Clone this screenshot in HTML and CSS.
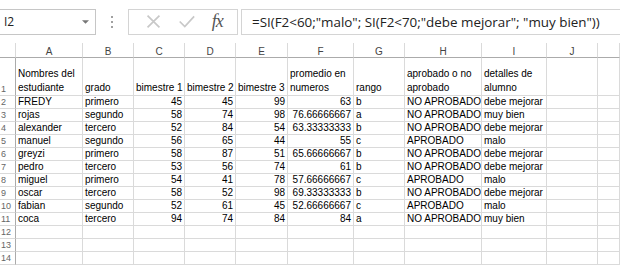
FILE: index.html
```html
<!DOCTYPE html>
<html>
<head>
    <link rel="stylesheet" href="styles.css">
</head>
<body>
    <div class="toolbar">
        <div class="name-box">
            <span>I2</span>
            <svg class="dropdown" viewBox="0 0 8 4"><path d="M0 0H8L4 4Z" fill="#777"/></svg>
        </div>
        <div class="grip">
            <span></span><span></span><span></span>
        </div>
        <div class="fx-buttons">
            <svg class="btn-icon" viewBox="0 0 20 20">
                <path d="M3 3L17 17M17 3L3 17" stroke="#c8c8c8" stroke-width="2" fill="none"/>
            </svg>
            <svg class="btn-icon" viewBox="0 0 20 20">
                <path d="M2 10L8 16L19 4" stroke="#c8c8c8" stroke-width="2" fill="none"/>
            </svg>
            <span class="fx">fx</span>
        </div>
        <div class="formula">=SI(F2&lt;60;"malo"; SI(F2&lt;70;"debe mejorar"; "muy bien"))</div>
    </div>

    <div class="sheet">
        <div class="corner"></div>
        <div class="col-head">A</div>
        <div class="col-head">B</div>
        <div class="col-head">C</div>
        <div class="col-head">D</div>
        <div class="col-head">E</div>
        <div class="col-head">F</div>
        <div class="col-head">G</div>
        <div class="col-head">H</div>
        <div class="col-head">I</div>
        <div class="col-head">J</div>
        <div class="col-head"></div>

        <div class="row-head tall">1</div>
        <div class="cell tall">Nombres del<br>estudiante</div>
        <div class="cell tall">grado</div>
        <div class="cell tall">bimestre 1</div>
        <div class="cell tall">bimestre 2</div>
        <div class="cell tall">bimestre 3</div>
        <div class="cell tall">promedio en<br>numeros</div>
        <div class="cell tall">rango</div>
        <div class="cell tall">aprobado o no<br>aprobado</div>
        <div class="cell tall">detalles de<br>alumno</div>
        <div class="cell tall"></div>
        <div class="cell tall"></div>
    </div>

    <script>
        var rows = [
            ['FREDY', 'primero', 45, 45, 99, '63', 'b', 'NO APROBADO', 'debe mejorar'],
            ['rojas', 'segundo', 58, 74, 98, '76.66666667', 'a', 'NO APROBADO', 'muy bien'],
            ['alexander', 'tercero', 52, 84, 54, '63.33333333', 'b', 'NO APROBADO', 'debe mejorar'],
            ['manuel', 'segundo', 56, 65, 44, '55', 'c', 'APROBADO', 'malo'],
            ['greyzi', 'primero', 58, 87, 51, '65.66666667', 'b', 'NO APROBADO', 'debe mejorar'],
            ['pedro', 'tercero', 53, 56, 74, '61', 'b', 'NO APROBADO', 'debe mejorar'],
            ['miguel', 'primero', 54, 41, 78, '57.66666667', 'c', 'APROBADO', 'malo'],
            ['oscar', 'tercero', 58, 52, 98, '69.33333333', 'b', 'NO APROBADO', 'debe mejorar'],
            ['fabian', 'segundo', 52, 61, 45, '52.66666667', 'c', 'APROBADO', 'malo'],
            ['coca', 'tercero', 94, 74, 84, '84', 'a', 'NO APROBADO', 'muy bien'],
            [], [], []
        ];
        var sheet = document.querySelector('.sheet');
        rows.forEach(function (r, i) {
            var html = '<div class="row-head">' + (i + 2) + '</div>';
            for (var c = 0; c < 11; c++) {
                var v = r[c] === undefined ? '' : r[c];
                var num = c >= 2 && c <= 5;
                html += '<div class="cell' + (num ? ' num' : '') + '">' + v + '</div>';
            }
            sheet.insertAdjacentHTML('beforeend', html);
        });
    </script>
</body>
</html>
```

FILE: styles.css
```css
body {
    margin: 0;
    padding: 0;
    background: #fff;
    font-family: "Liberation Sans", Arial, sans-serif;
    overflow: hidden;
}

.toolbar {
    display: flex;
    align-items: center;
    height: 43px;
}

.name-box {
    width: 96px;
    height: 26px;
    border: 1px solid #c6c6c6;
    border-left: none;
    box-sizing: border-box;
    display: flex;
    align-items: center;
    justify-content: space-between;
    padding: 0 6px 0 4px;
    font-family: "Open Sans", sans-serif;
    font-size: 12px;
    color: #222;
}

.dropdown {
    width: 7px;
    height: 4px;
}

.grip {
    width: 32px;
    display: flex;
    flex-direction: column;
    align-items: center;
    gap: 3px;
}

.grip span {
    width: 2px;
    height: 2px;
    background: #a0a0a0;
}

.fx-buttons {
    width: 110px;
    height: 26px;
    border: 1px solid #d4d4d4;
    box-sizing: border-box;
    display: flex;
    align-items: center;
    justify-content: space-around;
    padding: 0 6px 0 8px;
}

.btn-icon {
    width: 17px;
    height: 17px;
}

.fx {
    font-family: "Liberation Serif", serif;
    font-style: italic;
    font-size: 18px;
    color: #555;
    letter-spacing: -1px;
}

.formula {
    flex: 1;
    height: 26px;
    margin-left: 3px;
    border: 1px solid #d4d4d4;
    border-right: none;
    box-sizing: border-box;
    display: flex;
    align-items: center;
    padding-left: 10px;
    font-family: "Open Sans", sans-serif;
    font-size: 13.4px;
    color: #222;
    white-space: nowrap;
}

.sheet {
    display: grid;
    grid-template-columns: 16px 67px 51px 51px 51px 52px 66px 51px 77px 65px 51px 1fr;
    grid-template-rows: 15px 38px;
    grid-auto-rows: 13px;
}

.corner,
.col-head,
.row-head,
.cell {
    box-sizing: border-box;
    border-right: 1px solid #dadada;
    border-bottom: 1px solid #dadada;
    font-size: 10px;
    white-space: nowrap;
    overflow: hidden;
}

.corner,
.col-head {
    border-bottom-color: #ababab;
}

.col-head {
    text-align: center;
    color: #444;
    line-height: 12px;
    padding-top: 3px;
}

.row-head {
    color: #666;
    font-size: 9px;
    padding-left: 1px;
    display: flex;
    align-items: flex-end;
    line-height: 12px;
    border-right-color: #ababab;
}

.cell {
    color: #000;
    padding: 0 2px;
    line-height: 12px;
    display: flex;
    align-items: flex-end;
}

.cell.tall {
    line-height: 14px;
}

.cell.num {
    justify-content: flex-end;
}
```
